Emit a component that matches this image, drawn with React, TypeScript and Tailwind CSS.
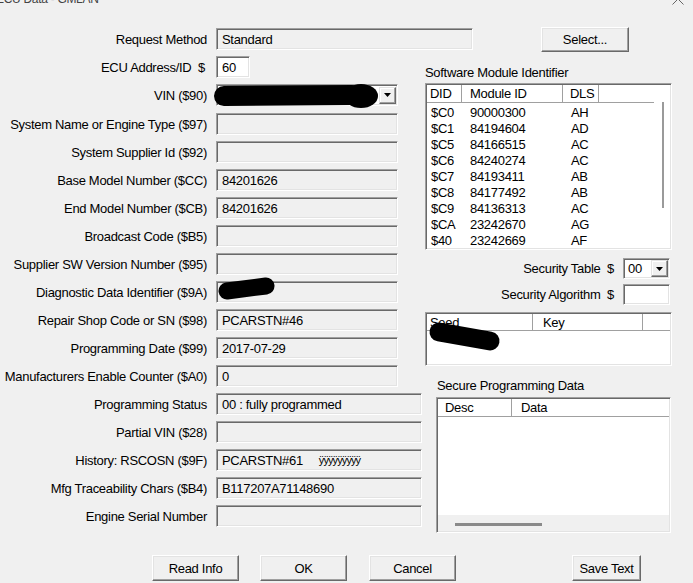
import React from "react";

const FONT = "font-['Liberation_Sans',Arial,sans-serif]";

function Sunken({ className = "", children }: { className?: string; children?: React.ReactNode }) {
  return (
    <div
      className={`border border-t-[#a0a0a0] border-l-[#a0a0a0] border-r-white border-b-white p-[1px] shadow-[inset_1px_1px_0_#696969,inset_-1px_-1px_0_#e3e3e3] ${className}`}
    >
      {children}
    </div>
  );
}

function Field({ className = "", white = false, children }: { className?: string; white?: boolean; children?: React.ReactNode }) {
  return (
    <Sunken className={`h-[22px] flex items-center pl-[5px] whitespace-nowrap ${white ? "bg-white" : "bg-[#f0f0f0]"} ${className}`}>
      {children}
    </Sunken>
  );
}

function Btn({ className = "", children }: { className?: string; children?: React.ReactNode }) {
  return (
    <div
      className={`flex items-center justify-center bg-[#f0f0f0] border border-t-white border-l-white border-r-[#696969] border-b-[#696969] shadow-[inset_-1px_-1px_0_#a0a0a0,inset_1px_1px_0_#e3e3e3] ${className}`}
    >
      {children}
    </div>
  );
}

function DropBtn() {
  return (
    <div className="w-[17px] h-[17px] flex items-center justify-center bg-[#f0f0f0] border border-t-[#e3e3e3] border-l-[#e3e3e3] border-r-[#696969] border-b-[#696969] shadow-[inset_-1px_-1px_0_#a0a0a0,inset_1px_1px_0_#ffffff]">
      <svg width="7" height="4" viewBox="0 0 7 4">
        <path d="M0 0 H7 L3.5 4 Z" fill="#000" />
      </svg>
    </div>
  );
}

function Row({ label, labelClass = "", children, className = "" }: { label: string; labelClass?: string; children?: React.ReactNode; className?: string }) {
  return (
    <div className={`flex items-center h-[22px] ${className}`}>
      <div className={`w-[207px] text-right whitespace-nowrap ${labelClass}`}>{label}</div>
      <div className="ml-[9px] flex">{children}</div>
    </div>
  );
}

const modules = [
  ["$C0", "90000300", "AH"],
  ["$C1", "84194604", "AD"],
  ["$C5", "84166515", "AC"],
  ["$C6", "84240274", "AC"],
  ["$C7", "84193411", "AB"],
  ["$C8", "84177492", "AB"],
  ["$C9", "84136313", "AC"],
  ["$CA", "23242670", "AG"],
  ["$40", "23242669", "AF"],
];

export default function App() {
  return (
    <div className={`relative w-[693px] h-[583px] overflow-hidden bg-[#f0f0f0] text-black text-[13px] leading-[15px] tracking-[-0.3px] ${FONT}`}>
      {/* clipped title bar */}
      <div className="h-[6px] overflow-hidden flex justify-between">
        <div className="-mt-[8px] -ml-[4px] text-[12px] leading-[14px] text-[#444] whitespace-nowrap">ECU Data - GMLAN</div>
        <svg className="mr-[9px] -mt-[7px]" width="12" height="12" viewBox="0 0 12 12">
          <path d="M0.5 0.5 L11.5 11.5 M11.5 0.5 L0.5 11.5" stroke="#666" strokeWidth="1" />
        </svg>
      </div>

      {/* row 1 */}
      <div className="mt-[22px] flex items-center h-[22px]">
        <div className="w-[207px] text-right">Request Method</div>
        <Field className="ml-[9px] w-[257px]">Standard</Field>
        <Btn className="ml-[68px] w-[88px] h-[25px]">Select...</Btn>
      </div>

      <div className="mt-[6px] flex">
        {/* left column */}
        <div className="w-[424px] flex flex-col gap-[6px]">
          <Row label={"ECU Address/ID\u00a0\u00a0$"} labelClass="pr-[2px]">
            <Field white className="w-[34px]">60</Field>
          </Row>
          <Row label="VIN ($90)">
            <Sunken className="w-[182px] h-[22px] bg-white flex items-center justify-end">
              <DropBtn />
            </Sunken>
          </Row>
          <Row label="System Name or Engine Type ($97)" className="mt-[1px]">
            <Field className="w-[182px]" />
          </Row>
          <Row label="System Supplier Id ($92)">
            <Field className="w-[182px]" />
          </Row>
          <Row label="Base Model Number ($CC)">
            <Field className="w-[182px]">84201626</Field>
          </Row>
          <Row label="End Model Number ($CB)">
            <Field className="w-[182px]">84201626</Field>
          </Row>
          <Row label="Broadcast Code ($B5)">
            <Field className="w-[182px]" />
          </Row>
          <Row label="Supplier SW Version Number ($95)">
            <Field className="w-[182px]" />
          </Row>
          <Row label="Diagnostic Data Identifier ($9A)">
            <Field className="w-[182px]" />
          </Row>
          <Row label="Repair Shop Code or SN ($98)">
            <Field className="w-[182px]">PCARSTN#46</Field>
          </Row>
          <Row label="Programming Date ($99)">
            <Field className="w-[182px]">2017-07-29</Field>
          </Row>
          <Row label="Manufacturers Enable Counter ($A0)">
            <Field className="w-[182px]">0</Field>
          </Row>
          <Row label="Programming Status">
            <Field className="w-[206px]">00 : fully programmed</Field>
          </Row>
          <Row label="Partial VIN ($28)">
            <Field className="w-[206px]" />
          </Row>
          <Row label="History: RSCOSN ($9F)">
            <Field className="w-[206px]">
              <span>PCARSTN#61</span>
              <span className="ml-[16px] text-[11px] tracking-[-0.9px]">ÿÿÿÿÿÿÿÿÿ</span>
            </Field>
          </Row>
          <Row label="Mfg Traceability Chars ($B4)">
            <Field className="w-[206px]">B117207A71148690</Field>
          </Row>
          <Row label="Engine Serial Number">
            <Field className="w-[206px]" />
          </Row>
        </div>

        {/* right column */}
        <div className="w-[269px] flex flex-col">
          <div className="mt-[9px] ml-[1px] h-[15px] whitespace-nowrap">Software Module Identifier</div>
          <Sunken className="mt-[3px] ml-[1px] w-[247px] h-[167px] bg-white flex">
            <div className="flex-1 flex flex-col">
              <div className="h-[18px] flex border-b border-[#a0a0a0]">
                <div className="w-[35px] pl-[3px] border-r border-[#a0a0a0] flex items-center">DID</div>
                <div className="w-[101px] pl-[7px] border-l border-white border-r border-r-[#a0a0a0] flex items-center">Module ID</div>
                <div className="w-[36px] pl-[6px] border-l border-white border-r border-r-[#a0a0a0] flex items-center">DLS</div>
                <div className="flex-1 border-l border-white" />
              </div>
              <div className="flex flex-col pt-[1px]">
                {modules.map(([d, m, l]) => (
                  <div key={d} className="h-[16px] flex items-center">
                    <span className="w-[35px] pl-[4px]">{d}</span>
                    <span className="w-[101px] pl-[8px]">{m}</span>
                    <span className="pl-[8px]">{l}</span>
                  </div>
                ))}
              </div>
            </div>
            <div className="w-[16px]">
              <div className="mt-[17px] ml-[8px] w-[2px] h-[106px] bg-[#9a9a9a]" />
            </div>
          </Sunken>

          <div className="mt-[8px] flex items-center justify-end pr-[23px] h-[21px]">
            <span className="whitespace-nowrap">{"Security Table\u00a0\u00a0$"}</span>
            <Sunken className="ml-[9px] w-[47px] h-[21px] bg-white flex items-center justify-between pl-[4px]">
              <span>00</span>
              <DropBtn />
            </Sunken>
          </div>
          <div className="mt-[5px] flex items-center justify-end pr-[23px] h-[21px]">
            <span className="whitespace-nowrap">{"Security Algorithm\u00a0\u00a0$"}</span>
            <Sunken className="ml-[9px] w-[47px] h-[21px] bg-white" />
          </div>

          <Sunken className="mt-[7px] ml-[1px] w-[247px] h-[54px] bg-white flex flex-col">
            <div className="h-[17px] flex border-b border-[#a0a0a0]">
              <div className="w-[106px] pl-[3px] border-r border-[#a0a0a0] flex items-center">Seed</div>
              <div className="w-[110px] pl-[9px] border-l border-white border-r border-r-[#a0a0a0] flex items-center">Key</div>
              <div className="flex-1 border-l border-white" />
            </div>
          </Sunken>

          <div className="mt-[12px] ml-[13px] h-[15px] whitespace-nowrap">Secure Programming Data</div>
          <Sunken className="mt-[4px] ml-[12px] w-[235px] h-[136px] bg-white flex flex-col">
            <div className="h-[18px] flex border-b border-[#a0a0a0]">
              <div className="w-[74px] pl-[7px] border-r border-[#a0a0a0] flex items-center">Desc</div>
              <div className="flex-1 pl-[8px] border-l border-white flex items-center">Data</div>
            </div>
            <div className="flex-1" />
            <div className="h-[16px] bg-[#f0f0f0]">
              <div className="mt-[8px] ml-[17px] w-[87px] h-[3px] bg-[#8a8a8a]" />
            </div>
          </Sunken>
        </div>
      </div>

      {/* bottom buttons */}
      <div className="mt-[22px] flex">
        <Btn className="ml-[152px] w-[87px] h-[26px]">Read Info</Btn>
        <Btn className="ml-[21px] w-[87px] h-[26px]">OK</Btn>
        <Btn className="ml-[22px] w-[87px] h-[26px]">Cancel</Btn>
        <Btn className="ml-[116px] w-[69px] h-[26px]">Save Text</Btn>
      </div>

      {/* redaction marks drawn over the fields */}
      <svg className="absolute inset-0 pointer-events-none" width="693" height="583" viewBox="0 0 693 583">
        <path d="M224 96 L352 95" stroke="#000" strokeWidth="20" strokeLinecap="round" />
        <ellipse cx="361" cy="96" rx="17" ry="12" fill="#000" />
        <path d="M227 291 L266 286" stroke="#000" strokeWidth="17" strokeLinecap="round" />
        <path d="M439 332 L490 341" stroke="#000" strokeWidth="19" strokeLinecap="round" />
      </svg>
    </div>
  );
}
